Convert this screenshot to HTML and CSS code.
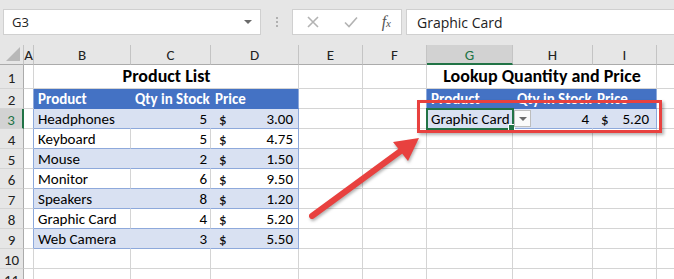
FILE: index.html
```html
<!doctype html>
<html>
    <head>
        <meta charset="utf-8">
        <link rel="stylesheet" href="styles.css">
    </head>
    <body>
        <div class="page">

            <!-- Formula bar -->
            <div class="formula-bar">
                <div class="name-box"><span>G3</span><span class="caret"></span></div>
                <div class="grip"><i></i><i></i><i></i></div>
                <div class="fx-tools">
                    <svg width="14" height="14" viewBox="0 0 14 14"><path d="M2 2 L12 12 M12 2 L2 12" stroke="#b3b3b3" stroke-width="1.6" fill="none"/></svg>
                    <svg width="16" height="14" viewBox="0 0 16 14"><path d="M2 7.5 L6 11.5 L14 2.5" stroke="#b3b3b3" stroke-width="1.6" fill="none"/></svg>
                    <span class="fx">f<small>x</small></span>
                </div>
                <div class="formula-input">Graphic Card</div>
            </div>

            <!-- Sheet -->
            <div class="sheet">
                <!-- column headers -->
                <div class="corner"><span class="corner-tri"></span></div>
                <div class="ch">A</div>
                <div class="ch">B</div>
                <div class="ch">C</div>
                <div class="ch">D</div>
                <div class="ch">E</div>
                <div class="ch">F</div>
                <div class="ch selected">G</div>
                <div class="ch">H</div>
                <div class="ch">I</div>
                <div class="ch"></div>

                <!-- row 1 -->
                <div class="rh">1</div>
                <div class="c"></div>
                <div class="c title span-3">Product List</div>
                <div class="c"></div>
                <div class="c"></div>
                <div class="c title span-3">Lookup Quantity and Price</div>
                <div class="c"></div>

                <!-- row 2 -->
                <div class="rh">2</div>
                <div class="c edge"></div>
                <div class="c th">Product</div>
                <div class="c th">Qty in Stock</div>
                <div class="c th last">Price</div>
                <div class="c"></div>
                <div class="c edge"></div>
                <div class="c th">Product</div>
                <div class="c th">Qty in Stock</div>
                <div class="c th last">Price</div>
                <div class="c"></div>

                <!-- row 3 -->
                <div class="rh active">3</div>
                <div class="c edge"></div>
                <div class="c tb band">Headphones</div>
                <div class="c tb band num">5</div>
                <div class="c tb band last money"><span>$</span><span>3.00</span></div>
                <div class="c"></div>
                <div class="c edge"></div>
                <div class="c tb band active-cell">Graphic Card<span class="handle"></span><span class="dropdown"></span></div>
                <div class="c tb band num">4</div>
                <div class="c tb band last money wide"><span>$</span><span>5.20</span></div>
                <div class="c"></div>

                <!-- row 4 -->
                <div class="rh">4</div>
                <div class="c edge"></div>
                <div class="c tb">Keyboard</div>
                <div class="c tb num">5</div>
                <div class="c tb last money"><span>$</span><span>4.75</span></div>
                <div class="c"></div>
                <div class="c"></div>
                <div class="c"></div>
                <div class="c"></div>
                <div class="c"></div>
                <div class="c"></div>

                <!-- row 5 -->
                <div class="rh">5</div>
                <div class="c edge"></div>
                <div class="c tb band">Mouse</div>
                <div class="c tb band num">2</div>
                <div class="c tb band last money"><span>$</span><span>1.50</span></div>
                <div class="c"></div>
                <div class="c"></div>
                <div class="c"></div>
                <div class="c"></div>
                <div class="c"></div>
                <div class="c"></div>

                <!-- row 6 -->
                <div class="rh">6</div>
                <div class="c edge"></div>
                <div class="c tb">Monitor</div>
                <div class="c tb num">6</div>
                <div class="c tb last money"><span>$</span><span>9.50</span></div>
                <div class="c"></div>
                <div class="c"></div>
                <div class="c"></div>
                <div class="c"></div>
                <div class="c"></div>
                <div class="c"></div>

                <!-- row 7 -->
                <div class="rh">7</div>
                <div class="c edge"></div>
                <div class="c tb band">Speakers</div>
                <div class="c tb band num">8</div>
                <div class="c tb band last money"><span>$</span><span>1.20</span></div>
                <div class="c"></div>
                <div class="c"></div>
                <div class="c"></div>
                <div class="c"></div>
                <div class="c"></div>
                <div class="c"></div>

                <!-- row 8 -->
                <div class="rh">8</div>
                <div class="c edge"></div>
                <div class="c tb">Graphic Card</div>
                <div class="c tb num">4</div>
                <div class="c tb last money"><span>$</span><span>5.20</span></div>
                <div class="c"></div>
                <div class="c"></div>
                <div class="c"></div>
                <div class="c"></div>
                <div class="c"></div>
                <div class="c"></div>

                <!-- row 9 -->
                <div class="rh">9</div>
                <div class="c edge"></div>
                <div class="c tb band">Web Camera</div>
                <div class="c tb band num">3</div>
                <div class="c tb band last money"><span>$</span><span>5.50</span></div>
                <div class="c"></div>
                <div class="c"></div>
                <div class="c"></div>
                <div class="c"></div>
                <div class="c"></div>
                <div class="c"></div>

                <!-- row 10 -->
                <div class="rh">10</div>
                <div class="c"></div>
                <div class="c"></div>
                <div class="c"></div>
                <div class="c"></div>
                <div class="c"></div>
                <div class="c"></div>
                <div class="c"></div>
                <div class="c"></div>
                <div class="c"></div>
                <div class="c"></div>

                <!-- row 11 -->
                <div class="rh">11</div>
                <div class="c"></div>
                <div class="c"></div>
                <div class="c"></div>
                <div class="c"></div>
                <div class="c"></div>
                <div class="c"></div>
                <div class="c"></div>
                <div class="c"></div>
                <div class="c"></div>
                <div class="c"></div>
            </div>

            <!-- Callout -->
            <div class="callout-box"></div>
            <svg class="callout-arrow" width="674" height="279" viewBox="0 0 674 279">
                <line x1="312" y1="216" x2="402" y2="150" stroke="#e8413f" stroke-width="6" stroke-linecap="round"/>
                <polygon points="419,138 393,142 408,161" fill="#e8413f"/>
            </svg>

        </div>
    </body>
</html>
```

FILE: styles.css
```css
body {
    margin: 0;
    background: #fff;
    font-family: Carlito, Lato, "Liberation Sans", sans-serif;
    font-size: 15px;
    color: #000;
}

.page {
    position: relative;
    width: 674px;
    height: 279px;
    overflow: hidden;
}

/* Formula bar */

.formula-bar {
    height: 45px;
    box-sizing: border-box;
    padding-top: 9px;
    background: #e6e6e6;
    display: flex;
    align-items: flex-start;
}

.name-box,
.fx-tools,
.formula-input {
    height: 26px;
    box-sizing: border-box;
    background: #fff;
    border: 1px solid #d0d0d0;
    display: flex;
    align-items: center;
}

.name-box {
    margin-left: 3px;
    width: 258px;
    padding: 0 8px 0 8px;
    justify-content: space-between;
    font-family: "Open Sans", sans-serif;
    font-size: 13px;
    color: #222;
}

.caret {
    width: 0;
    height: 0;
    border-left: 4px solid transparent;
    border-right: 4px solid transparent;
    border-top: 4px solid #6a6a6a;
}

.grip {
    width: 31px;
    height: 26px;
    display: flex;
    flex-direction: column;
    align-items: center;
    justify-content: center;
    gap: 2px;
}

.grip i {
    width: 2px;
    height: 2px;
    background: #b0b0b0;
}

.fx-tools {
    width: 110px;
    padding: 0 10px 0 13px;
    justify-content: space-between;
}

.fx {
    font-family: "Liberation Serif", serif;
    font-style: italic;
    font-size: 16px;
    color: #555;
}

.fx small {
    font-size: 11px;
}

.formula-input {
    margin-left: 4px;
    flex: 1;
    padding-left: 10px;
    border-right: 0;
    font-family: "Open Sans", sans-serif;
    font-size: 14px;
    color: #222;
}

/* Sheet grid */

.sheet {
    display: grid;
    grid-template-columns: 24px 10px 97px 80px 88px 64px 64px 86px 80px 64px 40px;
    grid-template-rows: 20px 24px repeat(10, 20px);
}

.corner,
.ch,
.rh {
    box-sizing: border-box;
    background: #e6e6e6;
    color: #222;
    display: flex;
    align-items: center;
    justify-content: center;
}

.corner {
    position: relative;
    border-right: 1px solid #c4c4c4;
    border-bottom: 1px solid #ababab;
}

.corner-tri {
    position: absolute;
    right: 3px;
    bottom: 3px;
    width: 0;
    height: 0;
    border-left: 14px solid transparent;
    border-bottom: 14px solid #b8b8b8;
}

.ch {
    border-right: 1px solid #c4c4c4;
    border-bottom: 1px solid #ababab;
    padding-top: 1px;
}

.ch.selected {
    background: #d2d2d2;
    color: #217346;
    border-bottom: 2px solid #217346;
}

.rh {
    border-right: 1px solid #ababab;
    border-bottom: 1px solid #d4d4d4;
    padding-top: 2px;
}

.rh.active {
    background: #d2d2d2;
    color: #217346;
    border-right: 2px solid #217346;
}

.c {
    box-sizing: border-box;
    border-right: 1px solid #d4d4d4;
    border-bottom: 1px solid #d4d4d4;
    padding: 0 3px 0 4px;
    display: flex;
    align-items: flex-end;
    white-space: nowrap;
    line-height: 17px;
}

.span-3 {
    grid-column: span 3;
}

.title {
    justify-content: center;
    font-weight: bold;
    font-size: 18px;
    line-height: 23px;
}

.edge {
    border-right-color: #8ea9db;
}

.th {
    background: #4472c4;
    color: #fff;
    font-weight: bold;
    border-right-color: #4472c4;
    border-bottom-color: #4472c4;
}

.tb {
    border-bottom-color: #8ea9db;
}

.band {
    background: #d9e1f2;
    border-right-color: #d9e1f2;
}

.last {
    border-right-color: #8ea9db;
}

.num {
    justify-content: flex-end;
}

.money {
    justify-content: space-between;
    padding: 0 5px 0 8px;
}

.money.wide {
    padding-right: 7px;
}

.active-cell {
    position: relative;
    outline: 2px solid #217346;
    outline-offset: -1px;
    z-index: 1;
}

.handle {
    position: absolute;
    right: -3px;
    bottom: -3px;
    width: 5px;
    height: 5px;
    background: #217346;
    border: 1px solid #fff;
}

.dropdown {
    position: absolute;
    left: 87px;
    top: 1px;
    width: 17px;
    height: 17px;
    box-sizing: border-box;
    background: #fafafa;
    border: 1px solid #bdbdbd;
}

.dropdown::after {
    content: "";
    position: absolute;
    left: 4px;
    top: 6px;
    border-left: 4px solid transparent;
    border-right: 4px solid transparent;
    border-top: 4px solid #6a6a6a;
}

/* Callout overlay */

.callout-box {
    position: absolute;
    left: 417px;
    top: 100px;
    width: 245px;
    height: 33px;
    box-sizing: border-box;
    border: 3px solid #e8413f;
    box-shadow: 2px 2px 3px rgba(0, 0, 0, .3);
    z-index: 2;
}

.callout-arrow {
    position: absolute;
    left: 0;
    top: 0;
    z-index: 2;
    filter: drop-shadow(1px 2px 1.5px rgba(0, 0, 0, .3));
}
```
